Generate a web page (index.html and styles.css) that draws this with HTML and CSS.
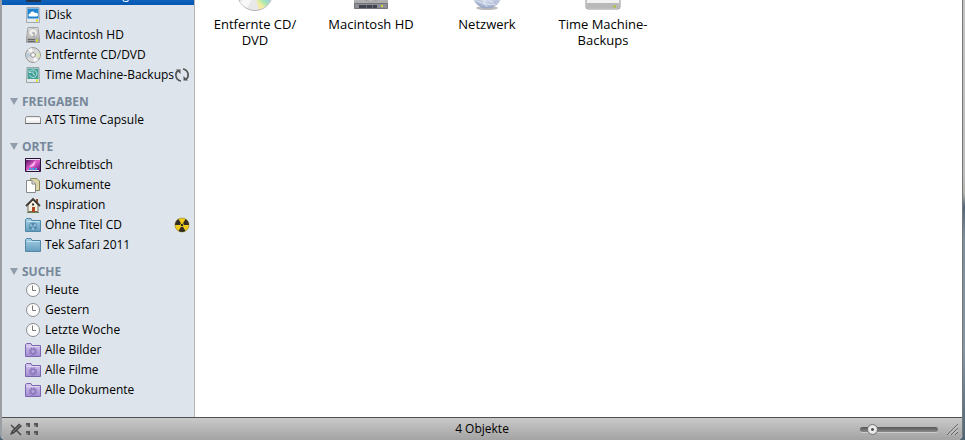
FILE: index.html
```
<!DOCTYPE html>
<html lang="de">
<head>
<meta charset="UTF-8">
<title>Finder</title>
<link rel="stylesheet" href="styles.css">
</head>
<body>
	<!-- gemeinsame Symbole -->
	<svg width="0" height="0" class="defs" aria-hidden="true">
		<defs>
			<linearGradient id="blue" x1="0" y1="0" x2="0" y2="1"><stop offset="0" stop-color="#a5cfe4"/><stop offset="1" stop-color="#669dbd"/></linearGradient>
			<linearGradient id="violet" x1="0" y1="0" x2="0" y2="1"><stop offset="0" stop-color="#d6caef"/><stop offset="1" stop-color="#a08bd0"/></linearGradient>
			<linearGradient id="metal" x1="0" y1="0" x2="0" y2="1"><stop offset="0" stop-color="#e8e8e8"/><stop offset="1" stop-color="#a3a3a3"/></linearGradient>
			<linearGradient id="rainbow" x1="0" y1="1" x2="1" y2="0"><stop offset="0" stop-color="#f7dcae"/><stop offset=".3" stop-color="#f3f0a0"/><stop offset=".5" stop-color="#a8e6b0"/><stop offset=".75" stop-color="#9dcdf0"/><stop offset="1" stop-color="#d7bfe8"/></linearGradient>
			<radialGradient id="globe" cx=".5" cy=".4" r=".6"><stop offset="0" stop-color="#f2f6fd"/><stop offset=".7" stop-color="#c3cde2"/><stop offset="1" stop-color="#95a3c2"/></radialGradient>
			<linearGradient id="space" x1="0" y1="0" x2="1" y2="1"><stop offset="0" stop-color="#3b0a50"/><stop offset=".5" stop-color="#e45bcb"/><stop offset="1" stop-color="#52106d"/></linearGradient>
			<symbol id="clock" viewBox="0 0 16 16">
				<circle cx="8" cy="8" r="6.5" fill="#fdfdfd" stroke="#8a8a8a"/>
				<path d="M7.5 3.5V8.5H11" fill="none" stroke="#777"/>
			</symbol>
			<symbol id="folder" viewBox="0 0 16 16">
				<path d="M.5 14.5V2.5L1.5 1.5H6L7 3.5H15.5V14.5Z" fill="url(#blue)" stroke="#5288a6"/>
				<path d="M1.5 4.5H14.5" stroke="#c4e2ef"/>
			</symbol>
			<symbol id="smart" viewBox="0 0 16 16">
				<path d="M.5 14.5V2.5L1.5 1.5H6L7 3.5H15.5V14.5Z" fill="url(#violet)" stroke="#7b65ac"/>
				<path d="M1.5 4.5H14.5" stroke="#e2daf4"/>
				<circle cx="8" cy="9.5" r="3.6" fill="none" stroke="#8a75bb" stroke-width="1.2" stroke-dasharray="1.6 1.2"/>
				<circle cx="8" cy="9.5" r="2.3" fill="none" stroke="#8a75bb" stroke-width="1.3"/>
			</symbol>
			<symbol id="burn" viewBox="0 0 16 16">
				<path d="M6 8H1A7 7 0 0 1 4.5 1.94L7 6.27A2 2 0 0 0 6 8ZM10 8H15A7 7 0 0 0 11.5 1.94L9 6.27A2 2 0 0 1 10 8ZM7 9.73L4.5 14.06A7 7 0 0 0 11.5 14.06L9 9.73A2 2 0 0 1 7 9.73Z"/>
				<circle cx="8" cy="8" r="1.3"/>
			</symbol>
		</defs>
	</svg>

	<div class="window">
		<div class="main">
			<nav class="sidebar">
				<ul>
					<li class="active"><a href="#"><svg class="icon" viewBox="0 0 16 16"><path d="M1 1H16V15H1Z" fill="#23344c"/></svg>Mac von Georg</a></li>
					<li><a href="#"><svg class="icon" viewBox="0 0 16 16">
						<path d="M2 .5H14L14.5 15.5H1.5Z" fill="#e5e8eb" stroke="#a2a8ae"/>
						<path d="M2.5 1.5H13.5V11.5H2.5Z" fill="#2385d1"/>
						<path d="M4 9.5A1.8 1.8 0 0 1 5.2 6.5A2.5 2.5 0 0 1 10 6A2 2 0 0 1 12 9.5Z" fill="#fff"/>
						<path d="M11 13.5H13" stroke="#dfe01c" stroke-width="2"/>
					</svg>iDisk</a></li>
					<li><a href="#"><svg class="icon" viewBox="0 0 16 16">
						<path d="M3 .5H13L14.5 11V15.5H1.5V11Z" fill="url(#metal)" stroke="#a2a2a2"/>
						<ellipse cx="8" cy="5.5" rx="4.500" ry="4" fill="#ececec" stroke="#bbb"/>
						<path d="M7 6H10M9 6V10" stroke="#999"/>
						<path d="M2 11.5H14V15H2Z" fill="#a5a5a5"/>
						<path d="M3 12.500H10M3 14.500H10" stroke="#666"/>
						<path d="M11 13.5H13" stroke="#dfe01c" stroke-width="2"/>
					</svg>Macintosh HD</a></li>
					<li><a href="#"><svg class="icon" viewBox="0 0 16 16">
						<circle cx="8" cy="8" r="7.4" fill="#dadada" stroke="#939393"/>
						<path d="M8 8L3 2.5A7 7 0 0 1 7 1ZM8 8L13 13.5A7 7 0 0 1 9 15Z" fill="#f8f8f8"/>
						<path d="M8 8L14.5 6A7 7 0 0 1 14 11Z" fill="#d9e5b4"/>
						<path d="M8 8L1.5 6A7 7 0 0 0 2 11Z" fill="#b8cbdd"/>
						<circle cx="8" cy="8" r="2.4" fill="#eee" stroke="#999"/>
						<circle cx="8" cy="8" r="1" fill="#fff"/>
					</svg>Entfernte CD/DVD</a></li>
					<li><a href="#"><svg class="icon" viewBox="0 0 16 16">
						<path d="M2 .5H14L14.5 15.5H1.5Z" fill="#e5e8eb" stroke="#9aa5a5"/>
						<path d="M2.5 1.5H13.5V12H2.5Z" fill="#43a19a"/>
						<path d="M5 4.500A3.800 3.800 0 1 1 4.500 8M4 3V5.500H6.500M8 4.500V7L10 8" fill="none" stroke="#d5efeb" stroke-width=".8"/>
						<path d="M11 13.5H13" stroke="#dfe01c" stroke-width="2"/>
					</svg>Time Machine-Backups</a>
					<button class="action" type="button" aria-label="Aktualisieren"><svg class="icon" viewBox="0 0 16 16">
						<path d="M7 14A6 6 0 0 1 4 3.500M9 2A6 6 0 0 1 12 12.500" fill="none" stroke="#555" stroke-width="1.700"/>
						<path d="M2 2.500H6.500V7ZM14 13.500H9.500V9Z" fill="#555"/>
					</svg></button></li>
				</ul>

				<h2><button type="button"><svg class="arrow" viewBox="0 0 8 8"><path d="M0 0H8L4 7Z"/></svg>FREIGABEN</button></h2>
				<ul>
					<li><a href="#"><svg class="icon" viewBox="0 0 16 16">
						<path d="M1.5 4.5H14.5L15.5 6V11.5H.5V6Z" fill="#eee" stroke="#8b8b8b"/>
						<path d="M1 7.5H15" stroke="#fff" stroke-width="2"/>
						<path d="M0 11.5H16" stroke="#666"/>
					</svg>ATS Time Capsule</a></li>
				</ul>

				<h2><button type="button"><svg class="arrow" viewBox="0 0 8 8"><path d="M0 0H8L4 7Z"/></svg>ORTE</button></h2>
				<ul>
					<li><a href="#"><svg class="icon" viewBox="0 0 16 16">
						<path d="M.5 1.5H15.5V14.5H.5Z" fill="url(#space)" stroke="#2b1438"/>
						<path d="M4 10L11 3L9 9Z" fill="#ffb5ee"/>
						<path d="M1 2.5H15" stroke="#eadcf0"/>
						<path d="M2 13.5H14" stroke="#ddd"/>
						<path d="M4 12H12" stroke="#37a7ec" stroke-width="2" stroke-dasharray="2 1"/>
					</svg>Schreibtisch</a></li>
					<li><a href="#"><svg class="icon" viewBox="0 0 16 16">
						<path d="M5.5 1.5H12L14.5 4V13.5H5.5Z" fill="#dcd5a6" stroke="#8c8763"/>
						<path d="M1.5 3.5H7L10.5 7V15.5H1.5Z" fill="#fdfdfb" stroke="#898989"/>
						<path d="M7 3.5V7H10.5" fill="#ddd" stroke="#898989"/>
					</svg>Dokumente</a></li>
					<li><a href="#"><svg class="icon" viewBox="0 0 16 16">
						<path d="M11 2H13V6H11Z" fill="#8e4b2c"/>
						<path d="M3 8L8 3L13 8V14.5H3Z" fill="#f6f1df" stroke="#77705f"/>
						<path d="M1 9L8 2L15 9" fill="none" stroke="#403c38" stroke-width="1.8"/>
						<path d="M7 10H10V15H7Z" fill="#b34423"/>
						<path d="M7 6.5H9V8.5H7Z" fill="#333"/>
						<path d="M2 15.5H14" stroke="#6d8150"/>
					</svg>Inspiration</a></li>
					<li><a href="#"><svg class="icon" viewBox="0 0 16 16">
						<use href="#folder"/>
						<circle cx="8" cy="9.5" r="4" fill="#528bad"/>
						<use href="#burn" x="4" y="5.5" width="8" height="8" fill="#91bfd8"/>
					</svg>Ohne Titel CD</a>
					<button class="action" type="button" aria-label="Brennen"><svg class="icon" viewBox="0 0 16 16">
						<circle cx="8" cy="8" r="7" fill="#f3cc1b" stroke="#8d7a24" stroke-width=".6"/>
						<use href="#burn" fill="#332e25"/>
					</svg></button></li>
					<li><a href="#"><svg class="icon"><use href="#folder"/></svg>Tek Safari 2011</a></li>
				</ul>

				<h2><button type="button"><svg class="arrow" viewBox="0 0 8 8"><path d="M0 0H8L4 7Z"/></svg>SUCHE</button></h2>
				<ul>
					<li><a href="#"><svg class="icon"><use href="#clock"/></svg>Heute</a></li>
					<li><a href="#"><svg class="icon"><use href="#clock"/></svg>Gestern</a></li>
					<li><a href="#"><svg class="icon"><use href="#clock"/></svg>Letzte Woche</a></li>
					<li><a href="#"><svg class="icon"><use href="#smart"/></svg>Alle Bilder</a></li>
					<li><a href="#"><svg class="icon"><use href="#smart"/></svg>Alle Filme</a></li>
					<li><a href="#"><svg class="icon"><use href="#smart"/></svg>Alle Dokumente</a></li>
				</ul>
			</nav>

			<main class="files">
				<a href="#"><svg viewBox="0 0 48 48">
					<circle cx="24" cy="29" r="17.5" fill="#e9e9e9" stroke="#b4b4b4"/>
					<path d="M24 29L41 31A17 17 0 0 1 28 45.500Z" fill="url(#rainbow)"/>
					<path d="M24 29L16 44A17 17 0 0 1 9 38Z" fill="#f8f8f8"/>
					<circle cx="24" cy="29" r="6" fill="#fff" stroke="#ccc"/>
				</svg>Entfernte CD/ DVD</a>
				<a href="#"><svg viewBox="0 0 48 48">
					<path d="M9 5H39L41 36V44H7V36Z" fill="url(#metal)"/>
					<ellipse cx="24" cy="29" rx="14" ry="8" fill="#f0f0f2" stroke="#999"/>
					<path d="M7.500 39.500H40.500V44.500H7.500Z" fill="#8d8e96" stroke="#72737b"/>
					<path d="M12 41H30V44H12Z" fill="#42444d"/>
					<path d="M19.500 41V44M25.500 41V44" stroke="#6c6e78"/>
					<path d="M34 42H36" stroke="#d6d937" stroke-width="2"/>
				</svg>Macintosh HD</a>
				<a href="#"><svg viewBox="0 0 48 48">
					<ellipse cx="24" cy="44" rx="11" ry="2" fill="#bbb"/>
					<circle cx="24" cy="30" r="14.500" fill="url(#globe)"/>
					<path d="M11 36L21 40L24 34L32 41L37 35M21 40L32 41M24 34L37 35M18 32L24 43" fill="none" stroke="#f4f8ff" stroke-width=".6"/>
				</svg>Netzwerk</a>
				<a href="#"><svg viewBox="0 0 48 48">
					<path d="M9 5H39L41 38V43Q41 45 39 45H9Q7 45 7 43V38Z" fill="#f3f3f3" stroke="#949494"/>
					<path d="M7.5 39H40.5V43Q40 44.5 39 44.5H9Q8 44.5 7.5 43Z" fill="#b9b9b9"/>
					<path d="M34 42.5H37" stroke="#b0bd36" stroke-width="2"/>
				</svg>Time Machine- Backups</a>
			</main>
		</div>

		<footer class="status">
			<div class="tools">
				<button type="button" aria-label="Bearbeiten"><svg viewBox="0 0 14 14">
					<path d="M2 3L12 13" stroke="#4c4c4c" stroke-width="1.6"/>
					<path d="M1 13L2.5 9L10 1.5L13 4L5 11.5Z" fill="#484848"/>
					<path d="M4 10L11 3" stroke="#777"/>
				</svg></button>
				<button type="button" aria-label="Anordnen"><svg viewBox="0 0 14 14">
					<path d="M1 1H5V5H1ZM9 1H13V5H9ZM1 9H5V13H1ZM9 9H13V13H9Z" fill="#555"/>
					<path d="M1 3H3V5H1ZM9 3H11V5H9ZM1 11H3V13H1ZM9 11H11V13H9Z" fill="#888"/>
				</svg></button>
			</div>
			<span class="count">4 Objekte</span>
			<div class="right">
				<input type="range" min="0" max="100" value="10" aria-label="Symbolgröße">
				<svg class="grip" viewBox="0 0 12 12"><path d="M1 12L12 1M5 12L12 5M9 12L12 9" stroke="#666"/><path d="M2 12.5L12.5 2M6 12.5L12.5 6" stroke="#ddd" stroke-width=".6"/></svg>
			</div>
		</footer>
	</div>
</body>
</html>
```
FILE: styles.css
```
* {box-sizing: border-box;}
body {margin: 0;font: 12px/20px "Lucida Grande", "Open Sans", sans-serif;color: #000;background: linear-gradient(#c4c4c4 0, #bcbcbc 40%, #b0b3ab 44%, #54677a 47%, #7e8e9d 54%, #8495a4 80%, #4d6473 100%);}
ul {list-style: none;margin: 0;padding: 0;}
a {color: inherit;text-decoration: none;}
button {font: inherit;color: inherit;background: none;border: 0;padding: 0;}
svg {display: block;flex: none;}
.defs {position: absolute;}

.window {display: flex;flex-direction: column;height: 100vh;margin-right: 2px;border-left: 2px solid #9b9fa3;border-right: 1px solid #777;border-radius: 0 0 5px 5px;overflow: hidden;background-color: #fff;}
.main {display: flex;flex: 1;min-height: 0;overflow: hidden;}

/* Seitenleiste, nach unten gescrollt */
.sidebar {width: 193px;flex: none;margin-top: -15px;background-color: #dde4eb;border-right: 1px solid #b4b4b4;}
.sidebar li {display: flex;justify-content: space-between;align-items: center;height: 20px;padding: 0 4px 0 23px;}
.sidebar li a {display: flex;align-items: center;gap: 4px;white-space: nowrap;}
.sidebar .active {background: linear-gradient(#2b83d3, #0457b2);color: #fff;}
.sidebar h2 {margin: 8px 0 0;font-size: 12px;line-height: 17px;color: #77879a;}
.sidebar h2 button {display: flex;align-items: center;gap: 4px;padding-left: 8px;}
.icon {width: 16px;height: 16px;}
.arrow {width: 8px;height: 8px;fill: #919dab;}

.files {display: flex;align-items: flex-start;flex: 1;padding-left: 2px;margin-top: -36px;}
.files a {width: 116px;padding: 0 10px;font-size: 13px;line-height: 16px;text-align: center;}
.files svg {width: 48px;height: 48px;margin: 0 auto 4px;}

.status {display: grid;grid-template-columns: 1fr auto 1fr;align-items: center;height: 23px;flex: none;background: linear-gradient(#c9c9c9, #a3a3a3);border-top: 1px solid #505050;}
.tools {display: flex;gap: 2px;padding-left: 7px;}
.tools svg {width: 14px;height: 14px;}
.right {display: flex;justify-content: flex-end;align-items: center;gap: 8px;padding-right: 4px;}
.right input {-webkit-appearance: none;appearance: none;width: 78px;height: 12px;margin: 0;background: none;}
.right input::-webkit-slider-runnable-track {height: 5px;border-radius: 3px;background: linear-gradient(#585858, #8a8a8a);box-shadow: 0 1px 0 #ccc;}
.right input::-webkit-slider-thumb {-webkit-appearance: none;width: 11px;height: 11px;margin-top: -3px;border: 1px solid #777;border-radius: 50%;background: radial-gradient(circle, #555 1px, #f2f2f2 2px, #d8d8d8 5px);}
.grip {width: 12px;height: 12px;}
```
